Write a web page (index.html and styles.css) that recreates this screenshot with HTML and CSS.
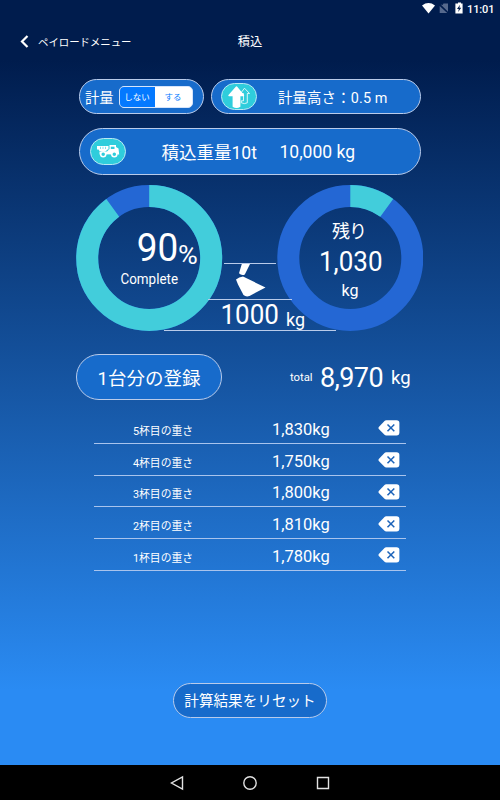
FILE: index.html
```html
<!DOCTYPE html>
<html lang="ja">
<head>
<meta charset="utf-8">
<title>積込</title>
<link rel="stylesheet" href="styles.css">
</head>
<body>
<div class="screen">
  <div class="status">
    <svg class="status-icons" width="44" height="16" viewBox="0 0 44 16">
      <path fill="#fff" d="M0 5.4Q6.5 .8 13 5.4L6.500 13.600Z"/>
      <path fill="#56698d" d="M18.700 4.400 26 11.800V3.600H21.500L20.600 5M17.700 5.900V13H25.200Z"/>
      <path fill="#fff" d="M34.500 3.500H36V2.600H39V3.500H40.600V13.500H33.400V3.500Z"/>
      <path fill="#001c4d" d="M38 4.800 35 9H36.800L36.200 12 39.200 7.800H37.400Z"/>
    </svg>
    <span class="clock">11:01</span>
  </div>
  <header class="header">
    <button class="back"><svg width="9" height="13" viewBox="0 0 9 13"><path d="M7.500 1 2 6.500 7.500 12" fill="none" stroke="#fff" stroke-width="2.200"/></svg><span>ペイロードメニュー</span></button>
    <h1 class="title">積込</h1>
  </header>
  <main class="main">
    <div class="controls">
      <div class="pill measure">
        <span>計量</span>
        <div class="switch"><span class="off">しない</span><span class="on">する</span></div>
      </div>
      <div class="pill height">
        <span class="badge badge-height">
          <svg width="34" height="26" viewBox="0 0 34 26">
            <path d="M22.500 4.200 27.500 9.500H25.300V18.800Q22.500 20.400 19.300 18.800V16.800H21.500V9.500H18.500Z" fill="none" stroke="#fff" stroke-width=".8"/>
            <path d="M14.500 3 21.500 11.500H17.700V22.500Q14.500 24.200 11.300 22.500V11.500H7Z" fill="#fff" stroke="#fff" stroke-width="1.400" stroke-linejoin="round"/>
          </svg>
        </span>
        <span class="height-text">計量高さ：0.5 m</span>
      </div>
    </div>
    <div class="pill load">
      <span class="badge badge-truck">
        <svg width="34" height="25" viewBox="0 0 34 25">
          <path d="M6 7H17.500V10.500H16.500L15 12H8.500L7.500 10.500H6Z" fill="#fff"/>
          <path d="M8.500 12.500H16L18.500 10V6H25V8L27.500 9.500 28.200 15.500H8.500Z" fill="#fff"/>
          <path d="M9.500 7.800V10M12 7.800V10M14.500 7.800V10" stroke="#2fcddc" stroke-width=".6"/>
          <path d="M19.800 7.700H23.500V10H19.800Z" fill="#2fcddc"/>
          <circle cx="12.200" cy="15.300" r="2.500" fill="#2fcddc" stroke="#fff" stroke-width="1.500"/>
          <circle cx="23.300" cy="15.300" r="2.500" fill="#2fcddc" stroke="#fff" stroke-width="1.500"/>
          <path d="M16.200 16.200H19.300" stroke="#2fcddc" stroke-width="1"/>
        </svg>
      </span>
      <span class="load-name">積込重量10t</span>
      <span class="load-value">10,000 kg</span>
    </div>
    <svg class="gauges" width="348" height="150" viewBox="75 183 348 150">
      <g fill="none" stroke-width="22">
        <circle cx="149.200" cy="258" r="62" stroke="#2467d4"/>
        <circle cx="149.200" cy="258" r="62" stroke="#42cddb" pathLength="100" stroke-dasharray="90 10" transform="rotate(-90 149.200 258)"/>
        <circle cx="350.300" cy="258" r="62" stroke="#2467d4"/>
        <circle cx="350.300" cy="258" r="62" stroke="#42cddb" pathLength="100" stroke-dasharray="10 90" transform="rotate(-90 350.300 258)"/>
      </g>
      <g stroke="#b9cbea" stroke-width="1"><path d="M224 263.500H276M208 299.500H292M164 330.500H336"/></g>
      <path fill="#fff" d="M241.800 264H250L244.800 274.500Q241.500 276 239 273.200ZM236 279.500Q239 276.800 243 276.500L265.500 287.500 249.500 296Q246 297.300 243.500 295L238 284.500Z"/>
      <g fill="#fff">
        <text x="136.800" y="260.500" font-size="38" textLength="41.500" lengthAdjust="spacingAndGlyphs">90</text>
        <text transform="translate(178 264) scale(1.080 1)" font-size="25">%</text>
        <text x="120.500" y="284" font-size="13.800" textLength="57.500" lengthAdjust="spacingAndGlyphs">Complete</text>
        <text x="332" y="237.500" font-size="18" textLength="35">残り</text>
        <text x="319" y="271" font-size="27.500" textLength="63.500" lengthAdjust="spacingAndGlyphs">1,030</text>
        <text x="341.500" y="296" font-size="17" textLength="17" lengthAdjust="spacingAndGlyphs">kg</text>
        <text x="220.500" y="324" font-size="27.500" textLength="58.500" lengthAdjust="spacingAndGlyphs">1000</text>
        <text x="286" y="326" font-size="18.500" textLength="19" lengthAdjust="spacingAndGlyphs">kg</text>
      </g>
    </svg>
    <div class="summary">
      <button class="pill register">1台分の登録</button>
      <div class="total"><span class="total-label">total</span><span class="total-value">8,970</span><span class="total-unit">kg</span></div>
    </div>
    <ul class="list">
      <li class="row"><span class="name">5杯目の重さ</span><span class="weight">1,830kg</span><svg class="delete" viewBox="0 0 22 16"><use href="#del"/></svg></li>
      <li class="row"><span class="name">4杯目の重さ</span><span class="weight">1,750kg</span><svg class="delete" viewBox="0 0 22 16"><use href="#del"/></svg></li>
      <li class="row"><span class="name">3杯目の重さ</span><span class="weight">1,800kg</span><svg class="delete" viewBox="0 0 22 16"><use href="#del"/></svg></li>
      <li class="row"><span class="name">2杯目の重さ</span><span class="weight">1,810kg</span><svg class="delete" viewBox="0 0 22 16"><use href="#del"/></svg></li>
      <li class="row"><span class="name">1杯目の重さ</span><span class="weight">1,780kg</span><svg class="delete" viewBox="0 0 22 16"><use href="#del"/></svg></li>
    </ul>
    <button class="pill reset">計算結果をリセット</button>
  </main>
  <nav class="navbar">
    <svg width="14" height="16" viewBox="0 0 14 16"><path d="M12.500 2V14L1.500 8Z"/></svg>
    <svg width="16" height="16" viewBox="0 0 16 16"><circle cx="8" cy="8" r="6.200"/></svg>
    <svg width="14" height="16" viewBox="0 0 14 16"><path d="M1.500 2.500H12.500V13.500H1.500Z"/></svg>
  </nav>
  <svg width="0" height="0" class="defs">
    <symbol id="del" viewBox="0 0 22 16">
      <path fill="#fff" d="M6.500 1Q7.200 .3 8.200 .3H18.500Q21.400 .3 21.400 3V12.500Q21.400 15.500 18.500 15.500H8.200Q7.200 15.500 6.500 14.800L.8 9Q0 8 .8 7Z"/>
      <path stroke="#1c63b9" stroke-width="1.500" d="M9.500 4.500 16.300 11.300M16.300 4.500 9.500 11.300"/>
    </symbol>
  </svg>
</div>
</body>
</html>
```
FILE: styles.css
```css
* { box-sizing: border-box; }
body { margin: 0; color: #fff; font-family: Roboto, "Noto Sans CJK JP", sans-serif; }
button { margin: 0; padding: 0; border: 0; background: none; color: inherit; font-family: inherit; }
.screen {
  width: 500px; height: 800px; overflow: hidden;
  display: flex; flex-direction: column;
  background: linear-gradient(#001c4d 0, #001c4d 60px, #2a8bf3 690px);
}
.status { height: 18px; flex: none; display: flex; justify-content: flex-end; padding-right: 6px; gap: 4px; }
.clock { width: 27px; font-size: 11px; line-height: 19px; font-weight: 500; letter-spacing: -.1px; white-space: nowrap; }
.status-icons { margin-right: -3px; }
.header { height: 46px; flex: none; display: grid; grid-template-columns: 1fr auto 1fr; align-items: center; padding: 0 20px; }
.back { display: flex; align-items: center; gap: 9px; font-size: 10.4px; white-space: nowrap; }
.title { margin: 0; font-size: 12.3px; font-weight: 400; }
.main { height: 701px; flex: none; padding-top: 15px; }
.pill { display: flex; align-items: center; border: 1px solid #b9cbea; border-radius: 40px; background: #176bcb; white-space: nowrap; }
.controls { display: flex; gap: 7px; margin-left: 79px; }
.measure { width: 125px; height: 35px; padding-left: 5px; gap: 5px; font-size: 14.3px; }
.switch { display: flex; width: 74px; height: 22px; border: 1px solid #d5e4fb; border-radius: 5px; overflow: hidden; background: #fff; font-size: 8.5px; line-height: 20px; text-align: center; }
.off { width: 35px; background: #0479ff; }
.on { flex: 1; color: #0479ff; }
.height { width: 210px; height: 35px; padding-left: 9px; font-size: 14.4px; }
.badge { flex: none; display: flex; align-items: center; justify-content: center; width: 36px; height: 27px; border: 1px solid #b9e9f4; border-radius: 14px; background: #2fcddc; }
.height-text { margin-left: 21px; letter-spacing: .15px; }
.load { width: 342px; height: 47px; margin: 14px 0 0 79px; padding-left: 10px; font-size: 17.5px; }
.load-name { width: 97px; margin-left: 35.5px; }
.load-value { margin-left: 21px; }
.gauges { display: block; margin: 8px 0 0 75px; }
.summary { display: flex; align-items: center; margin: 21px 0 0 76px; }
.register { width: 146px; height: 46px; justify-content: center; font-size: 18.5px; }
.total { width: 190px; display: flex; align-items: baseline; margin-left: 68px; padding-top: 8px; line-height: 32px; }
.total-label { width: 30px; font-size: 11.3px; position: relative; top: -6px; }
.total-value { width: 71px; font-size: 27px; letter-spacing: -.6px; }
.total-unit { font-size: 18.5px; position: relative; top: -3px; }
.list { width: 312px; margin: 12px 0 0 94px; padding: 0; list-style: none; }
.row { display: grid; grid-template-columns: 139px 145px 28px; align-items: center; height: 31.75px; padding-top: 2px; border-bottom: 1px solid #a9c4ed; }
.name { padding: 3px 0 0 39px; font-size: 10.8px; }
.weight { padding: 2px 0 0 39px; font-size: 16.5px; }
.delete { width: 22px; height: 16px; }
.reset { width: 154px; height: 35px; margin: 112px 0 0 173px; padding-bottom: 1px; justify-content: center; font-size: 14.6px; }
.navbar { flex: 1; display: flex; justify-content: center; align-items: center; gap: 58px; background: #000; }
.navbar svg { fill: none; stroke: #e2e2e2; stroke-width: 1.4; }
.defs { position: absolute; }
```
